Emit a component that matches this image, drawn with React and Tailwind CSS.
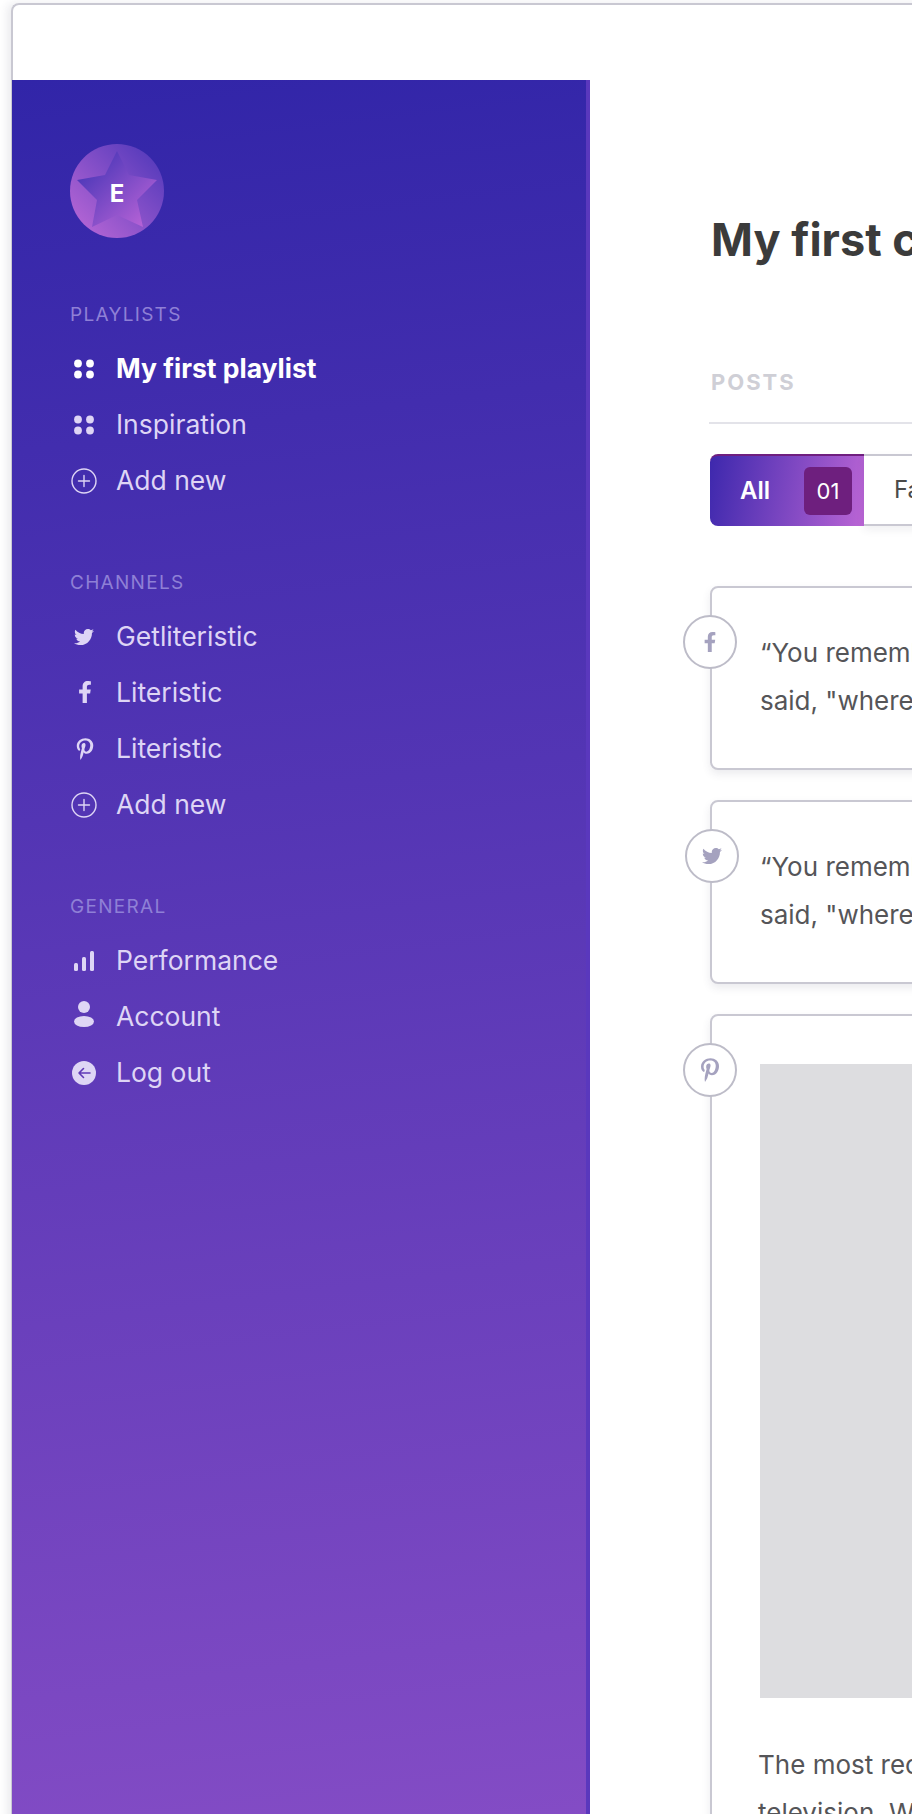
import React from 'react';
import { FaTwitter, FaFacebookF, FaPinterestP } from 'react-icons/fa';

const Dots = () => (
    <svg width="20" height="20" viewBox="0 0 20 20" fill="currentColor">
        <circle cx="4" cy="4.5" r="3.9" />
        <circle cx="16" cy="4.5" r="3.9" />
        <circle cx="4" cy="15.5" r="3.9" />
        <circle cx="16" cy="15.5" r="3.9" />
    </svg>
);

const PlusCircle = () => (
    <svg width="26" height="26" viewBox="0 0 26 26" fill="none" stroke="currentColor" strokeWidth="1.4" strokeLinecap="round" className="-ml-[3px]">
        <circle cx="13" cy="13" r="12" />
        <path d="M13 7.5v11M7.5 13h11" />
    </svg>
);

const Bars = () => (
    <svg width="20" height="20" viewBox="0 0 20 20" fill="currentColor">
        <rect x="0" y="12" width="4" height="8" rx="1.5" />
        <rect x="8" y="6" width="4" height="14" rx="1.5" />
        <rect x="16" y="0" width="4" height="20" rx="1.5" />
    </svg>
);

const User = () => (
    <svg width="20" height="26" viewBox="0 0 20 26" fill="currentColor" className="-mt-[6px]">
        <circle cx="10" cy="6" r="6" />
        <ellipse cx="10" cy="20.5" rx="10" ry="5.5" />
    </svg>
);

const LogOut = () => (
    <svg width="24" height="24" viewBox="0 0 24 24" className="-ml-[2px]">
        <circle cx="12" cy="12" r="12" fill="currentColor" />
        <path d="M18 12H7M11.5 7.5 7 12l4.5 4.5" fill="none" stroke="#5f39b6" strokeWidth="1.6" strokeLinecap="round" strokeLinejoin="round" />
    </svg>
);

const Logo = () => (
    <div className="relative w-[94px] h-[94px] rounded-full overflow-hidden bg-[linear-gradient(45deg,#c06ad8,#4a35b8)]">
        <svg width="94" height="94" viewBox="0 0 94 94" className="absolute inset-0">
            <defs>
                <linearGradient id="starFill" x1="0" y1="0" x2="1" y2="1">
                    <stop offset="0.1" stopColor="#4434b6" />
                    <stop offset="0.9" stopColor="#b562d6" />
                </linearGradient>
            </defs>
            <polygon
                points="47,7 59,31 87,36 67,56 73,83 47,71 22,83 27,56 7,36 35,31"
                fill="url(#starFill)"
            />
        </svg>
        <span className="absolute inset-0 flex items-center justify-center pt-[5px] text-white font-bold text-[24px] leading-none">E</span>
    </div>
);

const SectionTitle = ({ children }) => (
    <div className="h-6 mb-[14px] flex items-center text-[19px] tracking-[1.3px] uppercase text-[#8f80d6]">{children}</div>
);

const NavItem = ({ icon, label, active }) => (
    <div className={`flex items-center h-14 text-[26.5px] ${active ? 'text-white font-bold' : 'text-[#ded5f5]'}`}>
        <span className="w-[46px] shrink-0 flex items-center pl-[4px]">{icon}</span>
        <span>{label}</span>
    </div>
);

const Section = ({ title, items }) => (
    <section className="mb-[62px]">
        <SectionTitle>{title}</SectionTitle>
        {items.map((item) => (
            <NavItem key={item.key} icon={item.icon} label={item.label} active={item.active} />
        ))}
    </section>
);

const Sidebar = () => (
    <aside className="w-[578px] shrink-0 pt-16 pl-[58px] border-r-4 border-[#5a38bd] bg-[linear-gradient(173deg,#3125a8_0%,#8c50c8_100%)]">
        <Logo />
        <div className="mt-[65px]">
            <Section
                title="Playlists"
                items={[
                    { key: 'first', icon: <Dots />, label: 'My first playlist', active: true },
                    { key: 'inspiration', icon: <Dots />, label: 'Inspiration' },
                    { key: 'add', icon: <PlusCircle />, label: 'Add new' },
                ]}
            />
            <Section
                title="Channels"
                items={[
                    { key: 'tw', icon: <FaTwitter size={20} />, label: 'Getliteristic' },
                    { key: 'fb', icon: <span className="-mt-[3px]"><FaFacebookF size={22} /></span>, label: 'Literistic' },
                    { key: 'pin', icon: <FaPinterestP size={22} />, label: 'Literistic' },
                    { key: 'add', icon: <PlusCircle />, label: 'Add new' },
                ]}
            />
            <Section
                title="General"
                items={[
                    { key: 'perf', icon: <Bars />, label: 'Performance' },
                    { key: 'account', icon: <User />, label: 'Account' },
                    { key: 'logout', icon: <LogOut />, label: 'Log out' },
                ]}
            />
        </div>
    </aside>
);

const Tabs = () => (
    <div className="flex h-[72px] mt-[30px] ml-px">
        <div className="w-[154px] rounded-l-lg flex items-center pl-[30px] pr-3 justify-between bg-[linear-gradient(100deg,#3d28ad,#bb65d5)] border-t-2 border-[#6f1f7f]">
            <span className="text-white font-semibold text-[24px]">All</span>
            <span className="w-12 h-12 rounded-md bg-[#6e1f7e] text-white text-[22px] flex items-center justify-center">01</span>
        </div>
        <div className="w-[240px] border-y-2 border-[#c9c8d2] flex items-center pl-[30px] text-[24px] text-[#4a4a4a] bg-white shadow-[0_4px_8px_rgba(60,60,90,0.08)]">
            Facebook
        </div>
    </div>
);

const Badge = ({ icon, offset }) => (
    <div className={`absolute top-[27px] w-[54px] h-[54px] rounded-full border-2 border-[#bdbcc8] bg-white flex items-center justify-center text-[#a5a2bf] ${offset}`}>
        {icon}
    </div>
);

const Card = ({ icon, offset, children }) => (
    <div className="relative w-[1000px] rounded-lg border-2 border-[#c9c8d2] bg-white shadow-[0_4px_8px_rgba(60,60,90,0.1)]">
        <Badge icon={icon} offset={offset} />
        {children}
    </div>
);

const QuoteBody = () => (
    <div className="h-[180px] pl-[48px] pt-[41px] text-[26px] leading-[48px] text-[#555558] whitespace-nowrap">
        <p>“You remember</p>
        <p>said, "where</p>
    </div>
);

const Main = () => (
    <main className="flex-1 pl-[119px] pt-[132px]">
        <h1 className="text-[45px] leading-[56px] font-bold text-[#3b3b3b] pl-[2px] whitespace-nowrap">My first campaign</h1>
        <div className="mt-[98px] border-b-2 border-[#e3e3e9] h-[58px] text-[22px] font-bold tracking-[2px] text-[#cfcfd6] pl-[2px]">POSTS</div>
        <Tabs />
        <div className="mt-[60px] ml-px flex flex-col gap-[30px]">
            <Card icon={<FaFacebookF size={20} />} offset="-left-[29px]"><QuoteBody /></Card>
            <Card icon={<FaTwitter size={20} />} offset="-left-[27px]"><QuoteBody /></Card>
            <Card icon={<FaPinterestP size={24} />} offset="-left-[29px]">
                <div className="pl-[48px] pt-[48px] pb-[40px]">
                    <div className="h-[634px] bg-[#dddde0]" />
                    <div className="mt-[43px] -ml-[2px] text-[26px] leading-[48px] text-[#555558] whitespace-nowrap">
                        <p>The most recent</p>
                        <p>television. We</p>
                    </div>
                </div>
            </Card>
        </div>
    </main>
);

export default function App() {
    return (
        <div className="w-[912px] h-[1814px] overflow-hidden bg-white pl-[11px] pt-[3px] font-['Inter',sans-serif]">
            <div className="w-[1600px] h-[2000px] rounded-tl-lg border-l-2 border-t-2 border-[#c9c8d2] shadow-[-4px_0_8px_rgba(60,60,90,0.1)] flex flex-col">
                <div className="h-[75px] shrink-0" />
                <div className="flex flex-1 -ml-[1px]">
                    <Sidebar />
                    <Main />
                </div>
            </div>
        </div>
    );
}
